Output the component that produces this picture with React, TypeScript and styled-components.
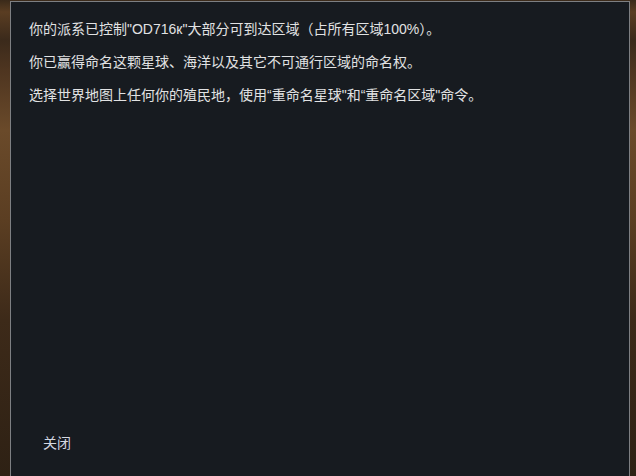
import React from "react";
import styled, { createGlobalStyle } from "styled-components";

const GlobalStyle = createGlobalStyle`
  html, body {
    margin: 0;
    padding: 0;
    width: 636px;
    height: 476px;
    overflow: hidden;
  }
  body {
    font-family: "Liberation Sans", "Noto Sans CJK SC", sans-serif;
    background: linear-gradient(
      180deg,
      #3a2a1a 0px,
      #5a3d22 12px,
      #3b2a1b 40px,
      #4e3520 70px,
      #6a4a2a 130px,
      #5b3e22 220px,
      #3d2a19 320px,
      #2e2114 476px
    );
  }
`;

const Page = styled.div`
  display: flex;
  height: 476px;
  padding: 1px 6px 0 10px;
  box-sizing: border-box;
`;

const Dialog = styled.div`
  flex: 1;
  display: flex;
  flex-direction: column;
  background: #171b20;
  border: 1px solid #7d7f82;
  border-bottom: none;
  box-sizing: border-box;
`;

const Body = styled.div`
  flex: 1;
  padding: 16px 18px 0 18px;
`;

const Paragraph = styled.p`
  margin: 0 0 11px;
  font-size: 14px;
  line-height: 22px;
  color: #e1e2e3;
  white-space: nowrap;
`;

const Footer = styled.div`
  display: flex;
  padding: 0 0 22px 32px;
`;

const CloseButton = styled.button`
  background: none;
  border: none;
  padding: 0;
  font-family: inherit;
  font-size: 14px;
  line-height: 22px;
  color: #d4d8e2;
  cursor: pointer;
`;

const lines = [
  "你的派系已控制\"OD716к\"大部分可到达区域（占所有区域100%）。",
  "你已赢得命名这颗星球、海洋以及其它不可通行区域的命名权。",
  "选择世界地图上任何你的殖民地，使用“重命名星球\"和“重命名区域\"命令。",
];

const App = () => (
  <>
    <GlobalStyle />
    <Page>
      <Dialog>
        <Body>
          {lines.map((line) => (
            <Paragraph key={line}>{line}</Paragraph>
          ))}
        </Body>
        <Footer>
          <CloseButton>关闭</CloseButton>
        </Footer>
      </Dialog>
    </Page>
  </>
);

export default App;
